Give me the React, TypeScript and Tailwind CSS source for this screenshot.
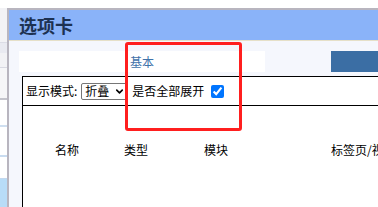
import { ChevronDown } from "lucide-react"

const cjk = { fontFamily: '"Noto Sans CJK SC", "Noto Sans", sans-serif' }

export default function App() {
  return (
    <div className="relative w-[378px] h-[207px] overflow-hidden bg-white" style={cjk}>
      <div className="flex h-full pt-2">
        {/* page behind the dialog */}
        <div className="w-[7px] shrink-0 flex flex-col bg-[#f2f2f5]">
          <div className="h-[35px] border-b border-[#dcdde6]" />
          <div className="h-[10px] bg-[#e9eaf1]" />
          <div className="h-[15px] border-b border-[#d8d9e2]" />
          <div className="h-[32px] border-b-2 border-[#c4c4cc] bg-[#f6f6f8]" />
          <div className="h-[27px] border-b-2 border-[#cfdff0] bg-white" />
          <div className="h-[30px] border-b-2 border-[#c9dcf0] bg-white" />
          <div className="h-[22px] border-b border-[#c4d8ee] bg-white" />
          <div className="flex-1 bg-[#b8dcf7]" />
        </div>

        {/* dialog */}
        <div className="flex-1 min-w-0 overflow-hidden flex flex-col border-t-2 border-l-2 border-[#b8b5bf] bg-[#f5f7fd]">
          <div className="h-[31px] shrink-0 bg-[#8ab3f9] border-b border-[#e6e0c8] flex items-center pl-[10px]">
            <span className="text-[18px] font-bold text-[#1d3252] leading-none">选项卡</span>
          </div>

          <div className="pt-[10px]">
            <div className="flex h-[21px] pl-[10px]">
              <div className="w-[246px] shrink-0 bg-white flex items-center pl-[111px]">
                <span className="text-[12px] text-[#3f72aa] leading-none">基本</span>
              </div>
              <div className="w-[66px] shrink-0" />
              <div className="flex-1 bg-[#3b6ea4]" />
            </div>
          </div>

          <div className="mt-[4px] ml-[13px] flex-1 bg-white border-t border-l border-black">
            <div className="h-[29px] border-b border-black flex items-center pl-[3px] text-[12px] text-black">
              <span>显示模式:</span>
              <div className="relative ml-[4px] w-[47px] h-[17px] border border-[#767676] rounded-[2px] flex items-center pl-[3px]">
                <span className="leading-none">折叠</span>
                <ChevronDown className="absolute right-[2px] w-[11px] h-[11px]" strokeWidth={3.5} />
              </div>
              <span className="ml-[4px]">是否全部展开</span>
              <input
                type="checkbox"
                defaultChecked
                className="ml-[7px] w-[13px] h-[13px] accent-[#0075ff]"
              />
            </div>
            <div className="flex pt-[35px] pl-[32px] text-[12px] text-black whitespace-nowrap">
              <div className="w-[69px] shrink-0">名称</div>
              <div className="w-[80px] shrink-0">类型</div>
              <div className="w-[127px] shrink-0">模块</div>
              <div className="shrink-0">标签页/视图</div>
            </div>
          </div>
        </div>
      </div>

      {/* highlight annotation */}
      <div className="absolute left-[125px] top-[42px] w-[117px] h-[89px] border-[3px] border-[#ff1f1f] rounded-[3px]" />
    </div>
  )
}
